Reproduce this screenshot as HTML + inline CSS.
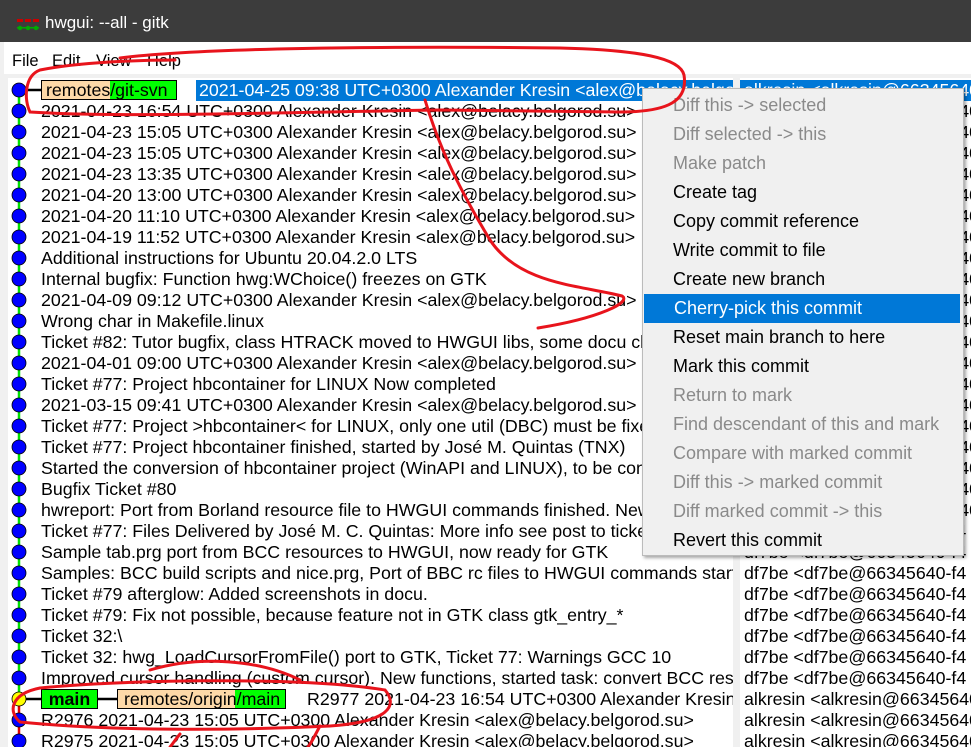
<!DOCTYPE html>
<html><head><meta charset="utf-8"><style>
*{margin:0;padding:0;box-sizing:border-box}
body{width:971px;height:747px;overflow:hidden;background:#f0f0f0;font-family:"Liberation Sans",sans-serif;position:relative}
#title{position:absolute;left:0;top:0;width:971px;height:42px;background:#3c3c3c;color:#fff;font-size:17px}
#title span{position:absolute;left:45px;top:13px}
#menubar{position:absolute;left:4px;top:42px;width:967px;height:32px;background:#fff;font-size:16.5px}
#menubar span{position:absolute;top:10px}
#left{position:absolute;left:8px;top:78px;width:725px;height:669px;background:#fff;overflow:hidden}
#right{position:absolute;left:740px;top:78px;width:231px;height:669px;background:#fff;overflow:hidden}
.r{position:absolute;height:21px;line-height:21px;font-size:17.8px;white-space:nowrap;color:#000}
.tag{position:absolute;height:20px;border:1px solid #000;font-size:17.8px;line-height:18px;white-space:nowrap}
#ctx{position:absolute;left:642px;top:88px;width:322px;height:468px;background:#f0f0f0;border:1px solid #bbb;box-shadow:2px 2px 3px rgba(0,0,0,.35);font-size:18px}
#ctx div{position:absolute;left:0;width:316px;height:29px;line-height:29px;padding-left:30px;color:#000}
#ctx .d{color:#8a8a8a}
#ctx .h{background:#0078d7;color:#fff;left:1px}
</style></head><body>
<div id="title">
<svg style="position:absolute;left:17px;top:19px" width="22" height="12"><rect x="0" y="0" width="6" height="3" fill="#c00"/><rect x="8" y="0" width="6" height="3" fill="#c00"/><rect x="16" y="0" width="6" height="3" fill="#c00"/><circle cx="3" cy="9" r="2.2" fill="#0a0"/><circle cx="11" cy="9" r="2.2" fill="#0a0"/><circle cx="19" cy="9" r="2.2" fill="#0a0"/><rect x="0" y="8" width="22" height="1.5" fill="#0a0"/></svg>
<span>hwgui: --all - gitk</span></div>
<div id="menubar"><span style="left:8px">File</span><span style="left:48px">Edit</span><span style="left:92px">View</span><span style="left:143px">Help</span></div>
<div id="left">
<svg style="position:absolute;left:0;top:0" width="60" height="669">
<line x1="11" y1="12" x2="11" y2="621" stroke="#00e000" stroke-width="2.5"/>
<line x1="11" y1="621" x2="11" y2="669" stroke="#e00000" stroke-width="2.5"/>
<line x1="11" y1="12" x2="34" y2="12" stroke="#000" stroke-width="2.5"/>
<line x1="11" y1="621" x2="34" y2="621" stroke="#000" stroke-width="2.5"/>
<g stroke="#000" stroke-width="0.8" id="dots"></g>
</svg>
<div class="tag" style="left:33px;top:2px;width:136px;background:linear-gradient(90deg,#fdd9a8 0,#fdd9a8 68px,#00ff00 68px)"><span style="padding-left:4px">remotes/git-svn</span></div>
<div class="r" style="left:188px;top:2px;width:537px;background:#0078d7;color:#fff;padding-left:3px">2021-04-25 09:38 UTC+0300 Alexander Kresin &lt;alex@belacy.belgorod.su&gt;</div>
<div class="tag" style="left:33px;top:611px;width:57px;background:#00ff00;font-weight:bold;text-align:center">main</div>
<svg style="position:absolute;left:90px;top:611px" width="20" height="20"><line x1="0" y1="10" x2="20" y2="10" stroke="#000" stroke-width="2.5"/></svg>
<div class="tag" style="left:109px;top:611px;width:169px;background:linear-gradient(90deg,#fdd9a8 0,#fdd9a8 117px,#00ff00 117px)"><span style="padding-left:6px">remotes/origin/main</span></div>
<div class="r" style="left:299px;top:611px">R2977 2021-04-23 16:54 UTC+0300 Alexander Kresin &lt;alex@belacy.belgorod.su&gt;</div>
<div id="rows"></div>
</div>
<div id="right"><div class="r" style="left:0;top:2px;width:231px;background:#0078d7;color:#fff;padding-left:4px">alkresin &lt;alkresin@66345640-f4</div><div id="rrows"></div></div>
<div id="ctx">
<div class="d" style="top:2px">Diff this -&gt; selected</div>
<div class="d" style="top:31px">Diff selected -&gt; this</div>
<div class="d" style="top:60px">Make patch</div>
<div style="top:89px">Create tag</div>
<div style="top:118px">Copy commit reference</div>
<div style="top:147px">Write commit to file</div>
<div style="top:176px">Create new branch</div>
<div class="h" style="top:205px">Cherry-pick this commit</div>
<div style="top:234px">Reset main branch to here</div>
<div style="top:263px">Mark this commit</div>
<div class="d" style="top:292px">Return to mark</div>
<div class="d" style="top:321px">Find descendant of this and mark</div>
<div class="d" style="top:350px">Compare with marked commit</div>
<div class="d" style="top:379px">Diff this -&gt; marked commit</div>
<div class="d" style="top:408px">Diff marked commit -&gt; this</div>
<div style="top:437px">Revert this commit</div>
</div>
<svg style="position:absolute;left:0;top:0" width="971" height="747" fill="none" stroke="#e8141c" stroke-width="3" stroke-linecap="round">
<path d="M120,58 C200,48 380,46 560,48 C640,50 680,58 684,75 C688,100 670,112 620,112 L440,110 C300,112 120,118 30,112 C24,100 24,76 40,70 C80,62 140,60 175,60"/>
<path d="M425,100 C440,150 460,190 490,240 C520,285 580,285 622,296 C632,302 600,318 538,328"/>
<path d="M150,670 C200,655 260,660 300,680 M40,688 C120,680 300,676 385,690 C398,705 390,722 330,726 C250,730 120,732 20,722 C8,712 10,694 40,688 M320,726 C315,735 312,742 308,747 M180,734 C175,740 172,745 170,747"/>
</svg>
<script>
var L=["","2021-04-23 16:54 UTC+0300 Alexander Kresin <alex@belacy.belgorod.su>","2021-04-23 15:05 UTC+0300 Alexander Kresin <alex@belacy.belgorod.su>","2021-04-23 15:05 UTC+0300 Alexander Kresin <alex@belacy.belgorod.su>","2021-04-23 13:35 UTC+0300 Alexander Kresin <alex@belacy.belgorod.su>","2021-04-20 13:00 UTC+0300 Alexander Kresin <alex@belacy.belgorod.su>","2021-04-20 11:10 UTC+0300 Alexander Kresin <alex@belacy.belgorod.su>","2021-04-19 11:52 UTC+0300 Alexander Kresin <alex@belacy.belgorod.su>","Additional instructions for Ubuntu 20.04.2.0 LTS","Internal bugfix: Function hwg:WChoice() freezes on GTK","2021-04-09 09:12 UTC+0300 Alexander Kresin <alex@belacy.belgorod.su>","Wrong char in Makefile.linux","Ticket #82: Tutor bugfix, class HTRACK moved to HWGUI libs, some docu changes","2021-04-01 09:00 UTC+0300 Alexander Kresin <alex@belacy.belgorod.su>","Ticket #77: Project hbcontainer for LINUX Now completed","2021-03-15 09:41 UTC+0300 Alexander Kresin <alex@belacy.belgorod.su>","Ticket #77: Project >hbcontainer< for LINUX, only one util (DBC) must be fixed","Ticket #77: Project hbcontainer finished, started by José M. Quintas (TNX)","Started the conversion of hbcontainer project (WinAPI and LINUX), to be continued","Bugfix Ticket #80","hwreport: Port from Borland resource file to HWGUI commands finished. New","Ticket #77: Files Delivered by José M. C. Quintas: More info see post to ticket","Sample tab.prg port from BCC resources to HWGUI, now ready for GTK","Samples: BCC build scripts and nice.prg, Port of BBC rc files to HWGUI commands started","Ticket #79 afterglow: Added screenshots in docu.","Ticket #79: Fix not possible, because feature not in GTK class gtk_entry_*","Ticket 32:\\","Ticket 32: hwg_LoadCursorFromFile() port to GTK, Ticket 77: Warnings GCC 10","Improved cursor handling (custom cursor). New functions, started task: convert BCC resources","","R2976 2021-04-23 15:05 UTC+0300 Alexander Kresin <alex@belacy.belgorod.su>","R2975 2021-04-23 15:05 UTC+0300 Alexander Kresin <alex@belacy.belgorod.su>"];
var h="",r="",d="";
function esc(s){return s.replace(/&/g,"&amp;").replace(/</g,"&lt;").replace(/>/g,"&gt;");}
for(var i=0;i<L.length;i++){var t=2+i*21;
d+='<circle cx="11" cy="'+(12+i*21)+'" r="7" fill="'+(i==29?'#ffff00':'#0000ff')+'"/>';
if(L[i])h+='<div class="r" style="left:33px;top:'+t+'px">'+esc(L[i])+'</div>';
if(i>0){var a=(i>=21&&i<29)?"df7be <df7be@66345640-f4":"alkresin <alkresin@66345640-f4";r+='<div class="r" style="left:4px;top:'+t+'px">'+esc(a)+'</div>';}}
document.getElementById("rows").innerHTML=h;document.getElementById("rrows").innerHTML=r;document.getElementById("dots").innerHTML=d;
</script>
</body></html>
